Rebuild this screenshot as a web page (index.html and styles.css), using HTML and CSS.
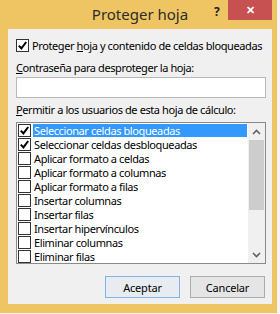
FILE: index.html
```html
<html lang="es">
  <head>
    <meta charset="utf-8"/>
    <title>Proteger hoja</title>
    <link rel="stylesheet" href="styles.css">
  </head>
  <body>
    <div class="window">
      <div class="titlebar">
        <span class="title">Proteger hoja</span>
        <span class="help">?</span>
        <span class="close">&#x2715;</span>
      </div>
      <div class="panel">
        <label class="check-row">
          <span class="box"><svg viewBox="0 0 11 11"><path d="M1.8 5.6 L4.4 8.4 L9.2 2" fill="none" stroke="#000" stroke-width="2"/></svg></span>
          <span class="nowrap">Proteger <u>h</u>oja y contenido de celdas bloqueadas</span>
        </label>
        <div class="field-label"><u>C</u>ontraseña para desproteger la hoja:</div>
        <div class="textbox"></div>
        <div class="list-label"><u>P</u>ermitir a los usuarios de esta hoja de cálculo:</div>
        <div class="listbox">
          <div class="items">
            <div class="item selected">
              <span class="box"><svg viewBox="0 0 11 11"><path d="M1.8 5.6 L4.4 8.4 L9.2 2" fill="none" stroke="#000" stroke-width="2"/></svg></span>
              <span class="text">Seleccionar celdas bloqueadas</span>
            </div>
            <div class="item">
              <span class="box"><svg viewBox="0 0 11 11"><path d="M1.8 5.6 L4.4 8.4 L9.2 2" fill="none" stroke="#000" stroke-width="2"/></svg></span>
              <span class="text">Seleccionar celdas desbloqueadas</span>
            </div>
            <div class="item"><span class="box"></span><span class="text">Aplicar formato a celdas</span></div>
            <div class="item"><span class="box"></span><span class="text">Aplicar formato a columnas</span></div>
            <div class="item"><span class="box"></span><span class="text">Aplicar formato a filas</span></div>
            <div class="item"><span class="box"></span><span class="text">Insertar columnas</span></div>
            <div class="item"><span class="box"></span><span class="text">Insertar filas</span></div>
            <div class="item"><span class="box"></span><span class="text">Insertar hipervínculos</span></div>
            <div class="item"><span class="box"></span><span class="text">Eliminar columnas</span></div>
            <div class="item"><span class="box"></span><span class="text">Eliminar filas</span></div>
          </div>
          <div class="scrollbar">
            <div class="arrow"><svg viewBox="0 0 9 6" width="9" height="6"><path d="M1 5 L4.5 1.5 L8 5" fill="none" stroke="#606060" stroke-width="1.6"/></svg></div>
            <div class="thumb"></div>
            <div class="track"></div>
            <div class="arrow"><svg viewBox="0 0 9 6" width="9" height="6"><path d="M1 1 L4.5 4.5 L8 1" fill="none" stroke="#606060" stroke-width="1.6"/></svg></div>
          </div>
        </div>
        <div class="buttons">
          <button class="default">Aceptar</button>
          <button>Cancelar</button>
        </div>
      </div>
    </div>
  </body>
</html>
```

FILE: styles.css
```css
* {
  box-sizing: border-box;
}
body {
  margin: 0;
  background: #f4f4f4;
  font-family: "Noto Sans", sans-serif;
  font-size: 11px;
  letter-spacing: -0.4px;
  color: #000;
}
.window {
  width: 277px;
  height: 313px;
  background: #efc563;
  padding: 0 5px 0 8px;
}
.titlebar {
  height: 29px;
  position: relative;
}
.title {
  display: block;
  text-align: center;
  font-size: 15px;
  letter-spacing: 0;
  line-height: 28px;
  color: #2b2b2b;
}
.help {
  position: absolute;
  left: 206px;
  top: 3px;
  font-weight: bold;
  font-size: 12px;
  color: #222;
}
.close {
  position: absolute;
  left: 220px;
  top: 0;
  width: 44px;
  height: 20px;
  background: #c75050;
  color: #fff;
  font-size: 11px;
  font-weight: bold;
  text-align: center;
  line-height: 20px;
}
.panel {
  height: 275px;
  background: #f0f0f0;
  padding: 10px 6px 0 8px;
}
.nowrap {
  white-space: nowrap;
}
.check-row {
  display: flex;
  align-items: center;
  gap: 3px;
  height: 13px;
}
.box {
  display: block;
  width: 13px;
  height: 13px;
  border: 1px solid #333;
  background: #fff;
  flex: none;
}
.box svg {
  display: block;
  width: 11px;
  height: 11px;
}
.field-label,
.list-label {
  line-height: 16px;
  white-space: nowrap;
}
.field-label {
  margin-top: 8px;
}
.textbox {
  margin-top: 1px;
  height: 21px;
  background: #fff;
  border: 1px solid #b8b8b8;
}
.list-label {
  margin-top: 4px;
}
.listbox {
  margin-top: 4px;
  height: 142px;
  border: 1px solid #8a8a8a;
  background: #fff;
  display: flex;
}
.items {
  flex: 1;
  padding-left: 1px;
}
.item {
  display: flex;
  align-items: center;
  height: 14px;
  gap: 2px;
}
.item .text {
  line-height: 13px;
  height: 13px;
  padding: 0 1px;
  flex: 1;
  margin-right: 1px;
  white-space: nowrap;
}
.item.selected .text {
  background: #3399ff;
  color: #fff;
}
.scrollbar {
  width: 17px;
  display: flex;
  flex-direction: column;
  background: #f0f0f0;
}
.arrow {
  height: 17px;
  display: flex;
  align-items: center;
  justify-content: center;
}
.thumb {
  height: 70px;
  background: #cdcdcd;
  margin: 0 1px;
}
.track {
  flex: 1;
}
.buttons {
  display: flex;
  justify-content: flex-end;
  gap: 10px;
  margin-top: 12px;
  padding-right: 1px;
}
button {
  width: 75px;
  height: 22px;
  font-family: "Noto Sans", sans-serif;
  font-size: 11px;
  letter-spacing: -0.2px;
  background: #e5e5e5;
  border: 1px solid #acacac;
  padding: 0;
  color: #000;
}
button.default {
  border-color: #7eb4ea;
  background: #e8ecf0;
}
```
